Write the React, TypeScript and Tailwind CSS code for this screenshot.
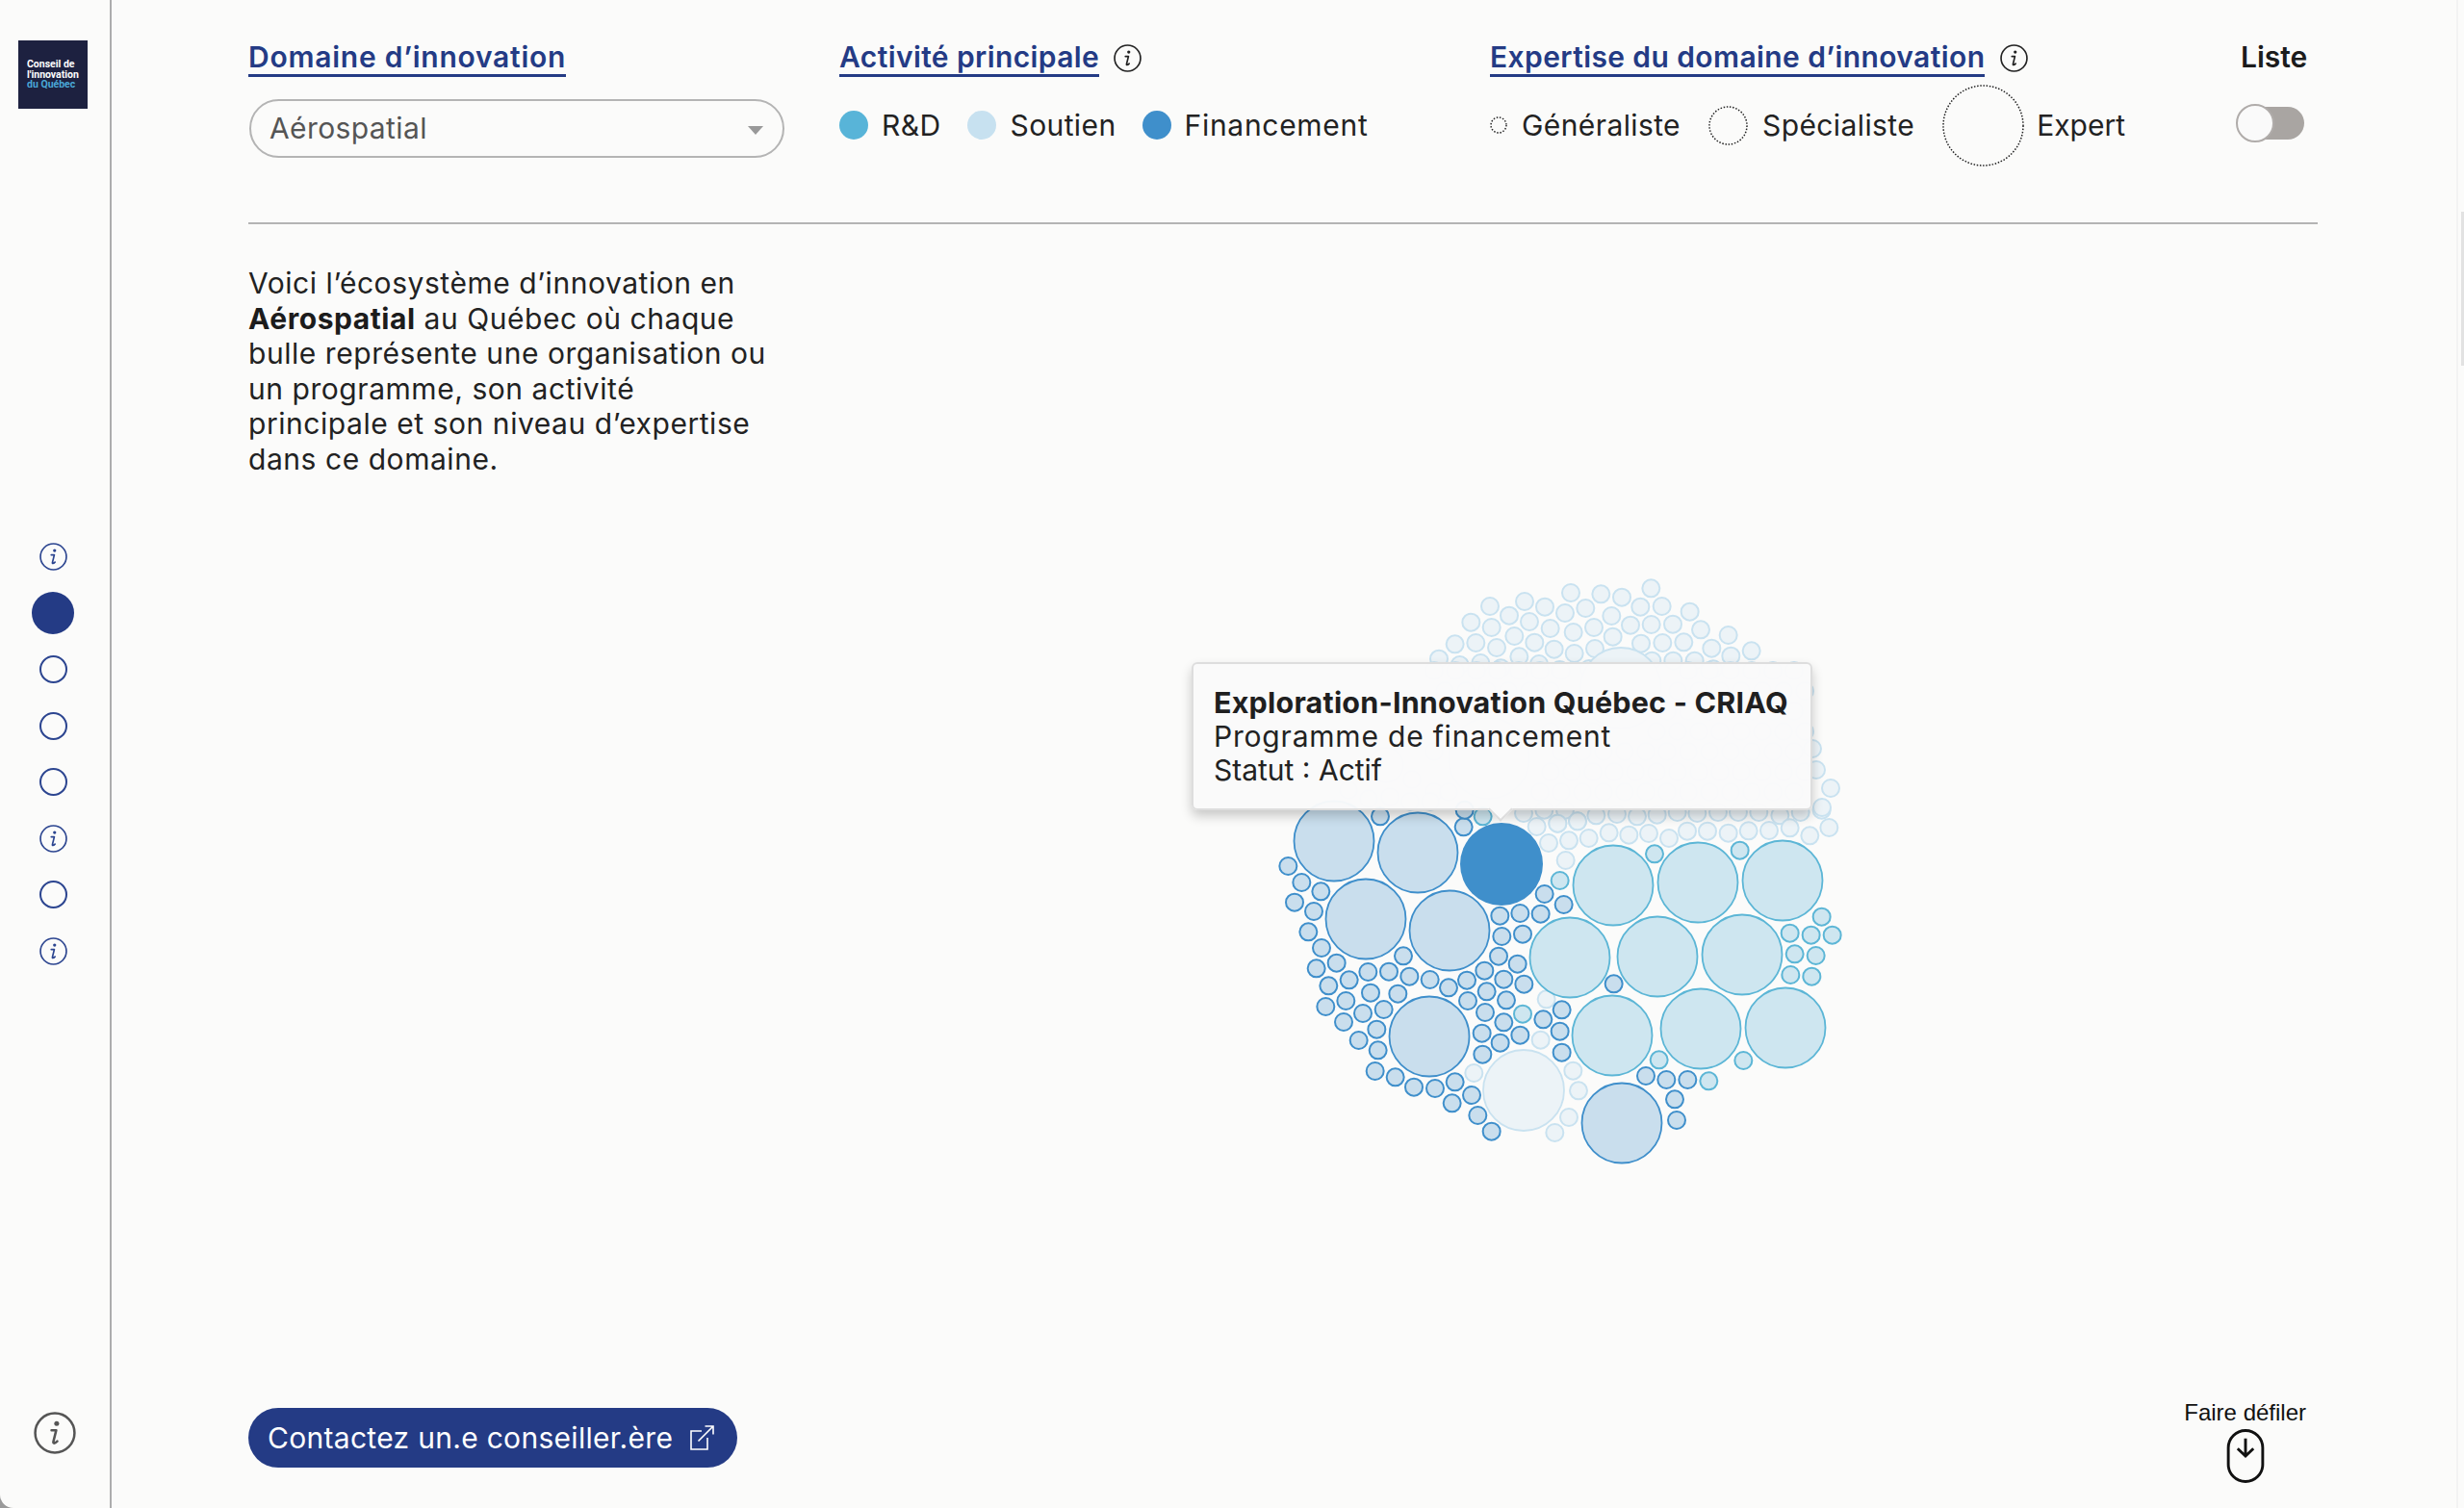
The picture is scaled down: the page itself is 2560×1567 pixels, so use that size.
type Pt = [number, number]

// bubble positions read off the chart, converted to page px (the svg viewBox uses page coords)
const fromA = (l: Pt[]) => l.map(([x, y]): Pt => [1300 + x / 3, 840 + y / 3])
const fromB = (l: Pt[]) => l.map(([x, y]): Pt => [1600 + x / 3, 840 + y / 3])
const fromC = (l: Pt[]) => l.map(([x, y]): Pt => [1460 + x / 3, 590 + y / 3])

const hiddenLight = (() => {
  const out: Pt[] = []
  let row = 0
  for (let y = 697; y < 836; y += 21) {
    for (let x = 1490 + (row % 2) * 11; x < 1882; x += 22) {
      if (Math.hypot(x - 1547, y - 788) < 54) continue
      if (Math.hypot(x - 1684, y - 715) < 53) continue
      out.push([x, y])
    }
    row++
  }
  return out
})()

const lightSmall: Pt[] = [
  ...fromC([[516,78],[610,82],[675,92],[766,64],[372,105],[435,122],[264,120],[562,126],[733,122],[800,120],[887,137],[498,141],[324,149],[205,170],[387,168],[643,150],[702,179],[767,177],[834,176],[269,186],[452,189],[588,186],[921,193],[524,201],[340,213],[647,215],[1007,210],[155,238],[220,234],[403,233],[285,249],[735,236],[802,234],[868,232],[464,254],[591,252],[955,251],[1079,259],[527,267],[1015,275],[105,284],[355,277],[769,290],[835,290],[902,290],[235,297],[170,303],[298,313],[417,300],[481,318],[573,315],[960,316]]),
  ...hiddenLight,
  [1401,821],[1422,830],[1444,828],[1465,833],[1486,833],[1505,823],[1467,810],
  ...fromA([[920,595],[902,722],[694,825],[890,57],[955,47],[1017,40],[927,108],[990,100],[980,162],[1003,818],[1020,880],[990,963],[946,1011],[849,15],[913,5],[978,5]]),
  ...fromB([[55,47],[117,40],[175,22],[240,18],[303,25],[365,20],[428,12],[490,15],[555,12],[618,12],[682,12],[748,22],[812,12],[878,5],[152,93],[215,76],[277,83],[339,78],[402,93],[459,71],[522,71],[587,77],[650,70],[714,69],[779,61],[841,85],[901,60]]),
  [1883,778],[1887,800],[1902,819],[1893,839],
]

const blueSmall: Pt[] = [
  ...fromA([[402,25],[662,58],[665,5],[115,180],[157,231],[217,259],[135,293],[195,321],[178,385],[219,435],[266,482],[203,499],[241,553],[305,535],[364,510],[429,509],[474,460],[493,524],[557,534],[615,559],[672,536],[727,506],[787,533],[850,548],[830,485],[771,461],[775,335],[838,327],[902,329],[914,267],[974,300],[781,399],[846,392],[734,571],[795,598],[675,600],[729,636],[787,667],[838,707],[776,731],[719,701],[721,767],[910,658],[968,628],[962,695],[968,761],[295,600],[232,618],[372,575],[457,578],[413,627],[348,639],[288,666],[391,689],[335,723],[395,754],[386,819],[449,838],[507,869],[573,873],[635,853],[687,894],[626,919],[706,957],[749,1007]]),
  ...fromB([[230,547],[330,834],[394,846],[460,846],[420,907],[426,972]]),
]

const tealSmall: Pt[] = [
  ...fromA([[846,641],[962,225],[722,25]]),
  ...fromB([[357,142],[623,131],[878,338],[779,389],[845,395],[911,395],[794,454],[860,459],[781,519],[847,524],[371,784],[634,786],[526,850]]),
]

const blueBig: Pt[] = [[1386,874],[1473,886],[1419,955],[1506,967],[1485,1077],[1685,1167]]
const tealBig: Pt[] = [[1676,920],[1764,917],[1852,915],[1631,995],[1722,994],[1810,992],[1675,1076],[1767,1069],[1855,1068]]

const InfoIcon = ({ className }: { className: string }) => (
  <svg viewBox="0 0 28 28" fill="none" className={className}>
    <circle cx="14" cy="14" r="13" stroke="currentColor" strokeWidth="1.6" />
    <circle cx="15.2" cy="7.8" r="1.6" fill="currentColor" />
    <path d="M11.8 12.2h3.1l-1.9 7.6c-.3 1.2.8 1.5 2.6-.3" stroke="currentColor" strokeWidth="1.6" strokeLinecap="round" strokeLinejoin="round" />
  </svg>
)

const DottedCircle = ({ size }: { size: number }) => (
  <svg width={size} height={size} viewBox={`0 0 ${size} ${size}`} fill="none" className="shrink-0">
    <circle cx={size / 2} cy={size / 2} r={size / 2 - 1} stroke="#222222" strokeWidth="1.5" strokeDasharray="1.5 1.7" />
  </svg>
)

const Heading = ({ children, track }: { children: string; track: string }) => (
  <span className={`text-[30px] leading-[36px] font-semibold ${track} text-[#243b85] border-b-[3px] border-[#243b85] whitespace-nowrap`}>
    {children}
  </span>
)

const Sidebar = () => (
  <aside className="w-[116px] shrink-0 h-full border-r-2 border-[#adadad] flex flex-col items-center pr-[4px] pt-[42px] pb-[56px]">
    <div className="w-[72px] h-[71px] bg-[#1d2140] pl-[9px] pt-[20px] text-[10.5px] leading-[10.5px] font-bold text-white [font-family:Roboto,sans-serif] whitespace-nowrap">
      Conseil de<br />l'innovation<br /><span className="text-[#4aa8d8]">du Québec</span>
    </div>
    <div className="mt-[436px] flex flex-col items-center text-[#2c4590]">
      <div className="h-[58.6px] flex items-center"><InfoIcon className="w-[29px] h-[29px]" /></div>
      <div className="h-[58.6px] flex items-center"><div className="w-[44px] h-[44px] rounded-full bg-[#243b85]" /></div>
      <div className="h-[58.6px] flex items-center"><div className="w-[29px] h-[29px] rounded-full border-2 border-[#2c4590]" /></div>
      <div className="h-[58.6px] flex items-center"><div className="w-[29px] h-[29px] rounded-full border-2 border-[#2c4590]" /></div>
      <div className="h-[58.6px] flex items-center"><div className="w-[29px] h-[29px] rounded-full border-2 border-[#2c4590]" /></div>
      <div className="h-[58.6px] flex items-center"><InfoIcon className="w-[29px] h-[29px]" /></div>
      <div className="h-[58.6px] flex items-center"><div className="w-[29px] h-[29px] rounded-full border-2 border-[#2c4590]" /></div>
      <div className="h-[58.6px] flex items-center"><InfoIcon className="w-[29px] h-[29px]" /></div>
    </div>
    <div className="mt-auto ml-[4px] text-[#555555]">
      <InfoIcon className="w-[44px] h-[44px]" />
    </div>
  </aside>
)

const Filters = () => (
  <div className="flex items-start h-[231px] pt-[41px]">
    <div className="w-[614px] shrink-0">
      <div className="h-[39px]"><Heading track="tracking-[0.75px]">Domaine d’innovation</Heading></div>
      <div className="mt-[23px] ml-[1px] w-[556px] h-[61px] rounded-full border-2 border-[#b4b4b4] flex items-center justify-between pl-[19px] pr-[20px]">
        <span className="text-[30px] text-[#555555] tracking-[0.4px]">Aérospatial</span>
        <div className="mt-[4px] w-0 h-0 border-x-[8px] border-x-transparent border-t-[9px] border-t-[#999999]" />
      </div>
    </div>
    <div className="w-[676px] shrink-0">
      <div className="h-[39px] flex items-start gap-[15px]">
        <Heading track="tracking-[0.4px]">Activité principale</Heading>
        <InfoIcon className="w-[29px] h-[29px] text-[#222222] mt-[5px]" />
      </div>
      <div className="mt-[28px] flex items-center h-[44px] text-[30px] tracking-[0.4px] text-[#222222]">
        <div className="w-[30px] h-[30px] rounded-full bg-[#58b4d8]" />
        <span className="ml-[14px]">R&amp;D</span>
        <div className="ml-[28px] w-[30px] h-[30px] rounded-full bg-[#c7e1f0]" />
        <span className="ml-[14px]">Soutien</span>
        <div className="ml-[27px] w-[30px] h-[30px] rounded-full bg-[#3f8fcb]" />
        <span className="ml-[14px] tracking-[0.7px]">Financement</span>
      </div>
    </div>
    <div className="w-[780px] shrink-0">
      <div className="h-[39px] flex items-start gap-[16px]">
        <Heading track="tracking-[0.4px]">Expertise du domaine d’innovation</Heading>
        <InfoIcon className="w-[29px] h-[29px] text-[#222222] mt-[5px]" />
      </div>
      <div className="mt-[28px] flex items-center h-[44px] text-[30px] tracking-[0.4px] text-[#222222]">
        <DottedCircle size={18} />
        <span className="ml-[15px]">Généraliste</span>
        <div className="ml-[29px]"><DottedCircle size={41} /></div>
        <span className="ml-[15px]">Spécialiste</span>
        <div className="ml-[29px]"><DottedCircle size={85} /></div>
        <span className="ml-[13px] tracking-[0px]">Expert</span>
      </div>
    </div>
    <div className="flex flex-col items-start">
      <span className="h-[39px] text-[30px] leading-[36px] font-semibold text-[#1c1c1c]">Liste</span>
      <div className="mt-[31px] -ml-[4px] relative w-[70px] h-[34px] rounded-full bg-[#a9a5a2]">
        <div className="absolute -left-[1px] -top-[3px] w-[40px] h-[40px] rounded-full bg-[#fafafa] border-2 border-[#b0acaa]" />
      </div>
    </div>
  </div>
)

const BubbleChart = () => (
  <div className="relative w-[640px] h-[620px] shrink-0">
    <svg viewBox="1300 590 640 620" className="w-[640px] h-[620px]">
      {lightSmall.map(([x, y], i) => (
        <circle key={i} cx={x} cy={y} r="9" fill="#ecf3f7" stroke="#c9e2f0" strokeWidth="2" />
      ))}
      <circle cx="1684" cy="715" r="42" fill="#ecf3f7" stroke="#c9e2f0" strokeWidth="1.8" />
      <circle cx="1547" cy="788" r="42" fill="#ecf3f7" stroke="#c9e2f0" strokeWidth="1.8" />
      <circle cx="1440" cy="795" r="18" fill="#ecf3f7" stroke="#c9e2f0" strokeWidth="1.8" />
      <circle cx="1583" cy="1133" r="42" fill="#ecf3f7" stroke="#c9e2f0" strokeWidth="1.8" />
      {tealBig.map(([x, y], i) => (
        <circle key={i} cx={x} cy={y} r="41.5" fill="#cee6f0" stroke="#5cb6d6" strokeWidth="1.8" />
      ))}
      {tealSmall.map(([x, y], i) => (
        <circle key={i} cx={x} cy={y} r="9" fill="#cee6f0" stroke="#5cb6d6" strokeWidth="2" />
      ))}
      {blueBig.map(([x, y], i) => (
        <circle key={i} cx={x} cy={y} r="41.5" fill="#c9deed" stroke="#3f8fcb" strokeWidth="1.8" />
      ))}
      {blueSmall.map(([x, y], i) => (
        <circle key={i} cx={x} cy={y} r="9" fill="#c9deed" stroke="#3f8fcb" strokeWidth="2" />
      ))}
      <circle cx="1560" cy="898" r="43" fill="#3f8fcb" />
    </svg>
    <div className="absolute left-[-62px] top-[98px] w-[645px] h-[154px] rounded-[6px] border-2 border-[#dddddd] bg-[#fafafa]/97 shadow-[0_6px_12px_rgba(0,0,0,0.2)] pl-[21px] pt-[22px] text-[#222222] leading-[35.5px] whitespace-nowrap">
      <div className="font-bold text-[#1f1f1f] text-[30.5px] tracking-[0.2px]">Exploration-Innovation Québec - CRIAQ</div>
      <div className="tracking-[0.8px] text-[30px]">Programme de financement</div>
      <div className="text-[30px]">Statut : Actif</div>
      <div className="absolute left-[310px] -bottom-[10px] w-[18px] h-[18px] rotate-45 bg-[#fafafa] border-r-2 border-b-2 border-[#dddddd]" />
    </div>
  </div>
)

const App = () => {
  return (
    <div className="relative h-[1567px] w-[2560px] overflow-hidden bg-[#fbfbfa] flex [font-family:Inter,sans-serif]">
      <Sidebar />
      <main className="flex-1 flex flex-col pl-[142px] pr-[152px]">
        <Filters />
        <div className="h-[2px] bg-[#b4b4b4] w-full" />
        <div className="flex items-start">
          <p className="w-[558px] shrink-0 pt-[43px] text-[30px] leading-[36.5px] tracking-[0.55px] text-[#222222] whitespace-nowrap">
            Voici l’écosystème d’innovation en<br />
            <b className="font-bold text-[#1c1c1c]">Aérospatial</b> au Québec où chaque<br />
            bulle représente une organisation ou<br />
            un programme, son activité<br />
            principale et son niveau d’expertise<br />
            dans ce domaine.
          </p>
          <div className="ml-[484px] mt-[357px]">
            <BubbleChart />
          </div>
        </div>
        <div className="mt-auto flex items-end justify-between pb-[26px]">
          <button className="mb-[16px] w-[508px] h-[62px] rounded-full bg-[#243b85] text-white flex items-center pl-[20px] text-[30px] tracking-[0.3px] whitespace-nowrap">
            Contactez un.e conseiller.ère
            <svg viewBox="0 0 26 26" fill="none" className="w-[26px] h-[26px] ml-auto mr-[24px]" stroke="currentColor" strokeWidth="1.6">
              <path d="M13 6H2v19h17V13" />
              <path d="M9.5 16.5 25 1M16.5 1H25v8.5" />
            </svg>
          </button>
          <div className="flex flex-col items-center mr-[12px]">
            <span className="text-[24px] leading-[28px] text-[#111111] [font-family:'Liberation_Sans',sans-serif]">Faire défiler</span>
            <svg viewBox="0 0 40 58" fill="none" className="w-[40px] h-[56px] mt-[3px]" stroke="#111111" strokeWidth="3">
              <rect x="1.5" y="1.5" width="37" height="55" rx="18.5" />
              <path d="M20 10v19M11.5 21 20 29l8.5-8" />
            </svg>
          </div>
        </div>
      </main>
      {/* scrollbar track, and the window's rounded bottom-left corner */}
      <div className="absolute right-[6px] top-0 bottom-0 w-[2px] bg-[#f3f3f3]" />
      <div className="absolute right-0 top-[220px] h-[160px] w-[3px] bg-[#e2e2e2]" />
      <div className="absolute inset-0 pointer-events-none rounded-bl-[14px] shadow-[0_0_0_20px_#9a9a9a]" />
    </div>
  )
}

export default App
